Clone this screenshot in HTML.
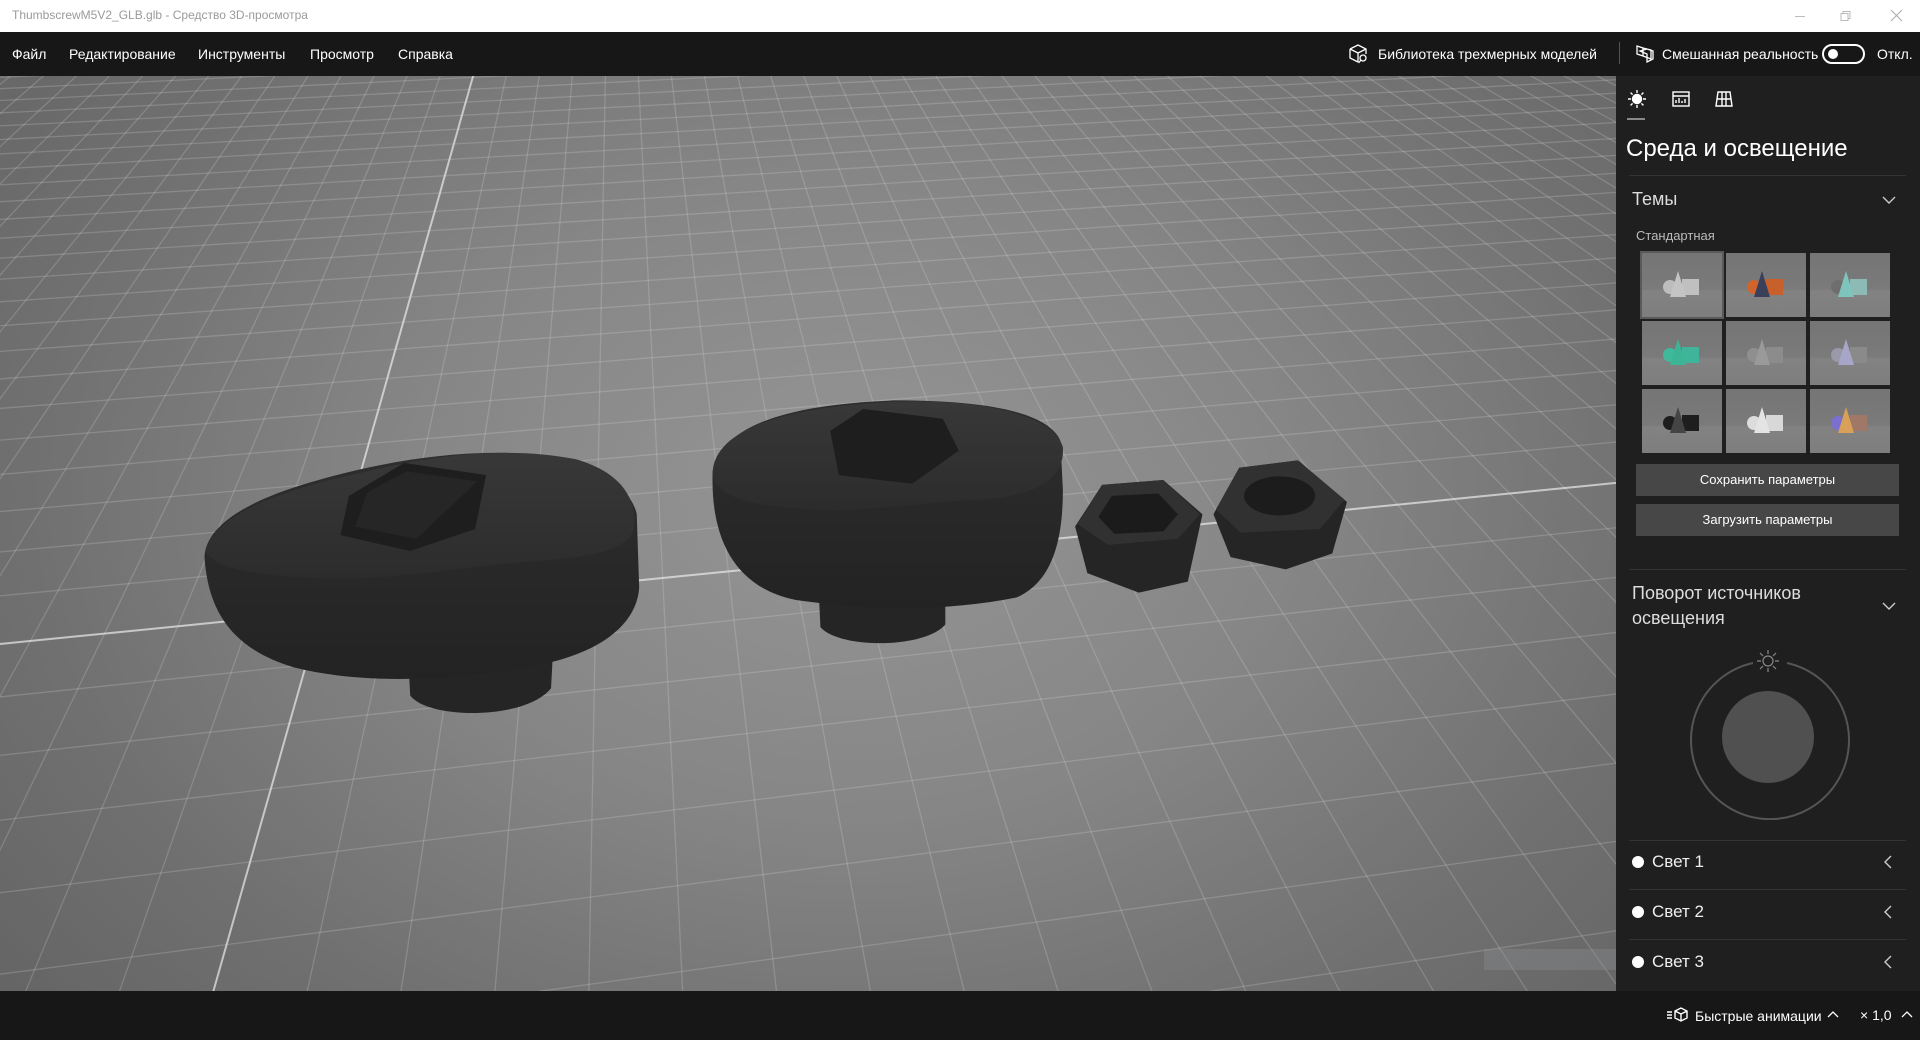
<!DOCTYPE html>
<html><head><meta charset="utf-8">
<style>
*{margin:0;padding:0;box-sizing:border-box}
html,body{width:1920px;height:1040px;overflow:hidden}
body{background:#1f1f1f;font-family:"Liberation Sans","Noto Sans CJK SC",sans-serif;color:#fff;position:relative}
.title{position:absolute;left:0;top:0;width:1920px;height:32px;background:#fff}
.title span{position:absolute;left:12px;top:8px;font-size:12px;color:#9a9a9a}
.menu{position:absolute;left:0;top:32px;width:1920px;height:44px;background:#171717}
.menu .it{position:absolute;top:14px;font-size:14px;color:#fff}
.vp{position:absolute;left:0;top:76px;width:1616px;height:915px;overflow:hidden;background:radial-gradient(ellipse 1100px 800px at 850px 420px,#959595 0%,#868686 40%,#707070 75%,#646464 100%)}
.panel{position:absolute;left:1616px;top:76px;width:304px;height:915px;background:#1f1f1f}
.bottom{position:absolute;left:0;top:991px;width:1920px;height:49px;background:#171717}
.abs{position:absolute}
.hl{position:absolute;left:1629px;width:277px;height:1px;background:#333}
.btn{position:absolute;left:1636px;width:263px;height:32px;background:#474747;font-size:13px;text-align:center;line-height:32px;color:#fff}
.thumb{position:absolute;width:80px;height:64px;background:linear-gradient(#757575 0%,#7a7a7a 55%,#828282 60%,#7e7e7e 100%);overflow:hidden}
.light{position:absolute;left:1632px;font-size:17px;color:#eee}
.light i{position:absolute;left:0;top:4px;width:12px;height:12px;border-radius:50%;background:#fff}
.light span{position:absolute;left:20px;top:0;white-space:nowrap}
</style></head><body>
<div class="title"><span>ThumbscrewM5V2_GLB.glb - Средство 3D-просмотра</span>
<svg class="abs" style="left:1795px;top:8px" width="120" height="16" viewBox="0 0 120 16"><path d="M0 8.5h10" stroke="#bbb"/><path d="M46 5.5h7v7h-7zM48 5.5v-2h7v7h-2" stroke="#bbb" fill="none"/><path d="M96 2l11 11M107 2l-11 11" stroke="#aaa"/></svg>
</div>
<div class="menu">
<span class="it" style="left:12px">Файл</span>
<span class="it" style="left:69px">Редактирование</span>
<span class="it" style="left:198px">Инструменты</span>
<span class="it" style="left:310px">Просмотр</span>
<span class="it" style="left:398px">Справка</span>
<svg class="abs" style="left:1348px;top:11px" width="22" height="22" viewBox="0 0 22 22" fill="none" stroke="#fff" stroke-width="1.3"><path d="M2 6l8-4 8 4v5M2 6v9l8 4M2 6l8 4 8-4M10 10v9"/><circle cx="15" cy="15" r="3"/><path d="M13 17l-2.5 3"/></svg>
<span class="it" style="left:1378px">Библиотека трехмерных моделей</span>
<div class="abs" style="left:1619px;top:10px;width:1px;height:22px;background:#555"></div>
<svg class="abs" style="left:1634px;top:11px" width="22" height="22" viewBox="0 0 22 22" fill="none" stroke="#fff" stroke-width="1.3"><path d="M3 3l6 2v8l-6-2zM9 5l8 2v9l-8-3M6 8l7 3v8l6-3v-8l-6-2-7 2z"/></svg>
<span class="it" style="left:1662px">Смешанная реальность</span>
<div class="abs" style="left:1822px;top:12px;width:43px;height:20px;border:2px solid #fff;border-radius:10px"><div style="position:absolute;left:4px;top:3px;width:10px;height:10px;border-radius:50%;background:#fff"></div></div>
<span class="it" style="left:1877px">Откл.</span>
</div>

<div class="vp"><svg id="g" width="1616" height="915" style="position:absolute;left:0;top:0"></svg>
<svg width="1616" height="915" style="position:absolute;left:0;top:0" viewBox="0 76 1616 915">
<defs><linearGradient id="bd" x1="0" y1="0" x2="0" y2="1"><stop offset="0" stop-color="#2e2e2e"/><stop offset="1" stop-color="#232323"/></linearGradient>
<linearGradient id="tp" x1="0" y1="0" x2="0" y2="1"><stop offset="0" stop-color="#383838"/><stop offset="1" stop-color="#2c2c2c"/></linearGradient></defs>
<g transform="scale(1.2245)">
<path d="M333,530 L452,525 L450,562 C430,588 350,588 335,568 Z" fill="#252525"/>
<path d="M167,455 C170,500 190,530 240,545 C300,560 370,555 430,545 C490,535 520,510 522,480 L520,420 C515,395 480,375 420,370 C360,368 300,380 250,395 C200,410 168,430 167,455 Z" fill="url(#bd)"/>
<path d="M168,450 C175,420 230,400 300,385 C360,370 420,365 470,375 C505,385 520,405 518,430 C515,450 480,455 440,458 C380,462 320,475 260,472 C210,470 175,465 168,450 Z" fill="url(#tp)"/>
<polygon points="285,405 330,378 397,388 388,432 335,450 278,437" fill="#1e1e1e"/>
<polygon points="300,402 332,385 390,393 340,440 290,430" fill="#262626"/>
<path d="M668,470 L772,470 L772,510 C755,530 685,530 670,512 Z" fill="#252525"/>
<path d="M582,385 C580,440 600,480 650,490 C720,500 780,498 830,488 C860,475 868,440 868,400 L866,360 C855,335 800,327 730,327 C650,330 590,345 582,385 Z" fill="url(#bd)"/>
<path d="M582,385 C585,350 640,333 730,328 C800,326 860,338 868,365 C870,395 840,405 800,408 C750,410 700,420 650,415 C600,412 582,400 582,385 Z" fill="url(#tp)"/>
<polygon points="678,352 705,334 770,342 783,368 745,395 685,388" fill="#1e1e1e"/>
<polygon points="878,430 900,396 950,392 982,420 970,475 930,484 888,468" fill="#252525"/>
<polygon points="880,428 900,396 950,392 980,420 962,440 905,445" fill="#313131"/>
<polygon points="897,422 908,405 946,403 962,420 950,434 910,436" fill="#1b1b1b"/>
<polygon points="991,420 1012,382 1060,376 1100,410 1088,452 1050,465 1005,455" fill="#252525"/>
<polygon points="993,416 1012,382 1060,376 1098,408 1078,432 1013,435" fill="#313131"/>
<ellipse cx="1045" cy="405" rx="29" ry="16" fill="#1c1c1c"/>
</g>
<rect x="1484" y="949" width="170" height="21" fill="#8a9096" opacity="0.35"/>
</svg>
</div>

<div class="panel"></div>
<svg class="abs" style="left:1626px;top:88px" width="110" height="24" viewBox="0 0 110 24" fill="none" stroke="#fff" stroke-width="1.4">
<circle cx="11" cy="11" r="4.5" fill="#fff"/><path d="M11 2v3M11 17v3M2 11h3M17 11h3M4.6 4.6l2 2M15.4 15.4l2 2M4.6 17.4l2-2M15.4 6.6l2-2"/>
<rect x="47" y="4" width="16" height="14"/><path d="M47 8h16M50 15v-3M53 15v-5M56 15v-2M59 15v-4"/>
<path d="M92 4h12l2 14h-16zM91 11h14M96 4v14M100 4v14"/>
</svg>
<div class="abs" style="left:1627px;top:118px;width:18px;height:2px;background:#888"></div>
<div class="abs" style="left:1626px;top:135px;font-size:24px;color:#fff">Среда и освещение</div>
<div class="hl" style="top:175px"></div>
<div class="abs" style="left:1632px;top:189px;font-size:18px;color:#ddd">Темы</div>
<svg class="abs" style="left:1881px;top:194px" width="16" height="12"><path d="M2 3l6 6 6-6" stroke="#ccc" fill="none" stroke-width="1.4"/></svg>
<div class="abs" style="left:1636px;top:228px;font-size:13px;color:#bbb">Стандартная</div>
<div id="thumbs"></div>
<div class="btn" style="top:464px">Сохранить параметры</div>
<div class="btn" style="top:504px">Загрузить параметры</div>
<div class="hl" style="top:569px"></div>
<div class="abs" style="left:1632px;top:581px;font-size:18px;line-height:25px;color:#ddd">Поворот источников<br>освещения</div>
<svg class="abs" style="left:1881px;top:600px" width="16" height="12"><path d="M2 3l6 6 6-6" stroke="#ccc" fill="none" stroke-width="1.4"/></svg>
<svg class="abs" style="left:1680px;top:640px" width="180" height="180" viewBox="0 0 180 180">
<path d="M73 23 A79 79 0 1 0 107 23" fill="none" stroke="#555" stroke-width="2"/>
<circle cx="88" cy="97" r="46" fill="#505050"/>
<circle cx="88" cy="21" r="5" fill="none" stroke="#888" stroke-width="1.2"/>
<path d="M88 10v4M88 28v4M77 21h4M95 21h4M80 13l3 3M93 26l3 3M80 29l3-3M93 16l3-3" stroke="#888" stroke-width="1.2"/>
</svg>
<div class="hl" style="top:840px"></div>
<div class="light" style="top:852px"><i></i><span>Свет 1</span></div>
<div class="hl" style="top:889px"></div>
<div class="light" style="top:902px"><i></i><span>Свет 2</span></div>
<div class="hl" style="top:939px"></div>
<div class="light" style="top:952px"><i></i><span>Свет 3</span></div>
<svg class="abs" style="left:1882px;top:853px" width="14" height="120" fill="none" stroke="#ccc" stroke-width="1.4"><path d="M9 3l-6 6 6 6M9 53l-6 6 6 6M9 103l-6 6 6 6"/></svg>
<div class="bottom">
<svg class="abs" style="left:1666px;top:15px" width="24" height="18" viewBox="0 0 24 18" fill="none" stroke="#fff" stroke-width="1.4"><path d="M1 6h5M1 9h5M1 12h5M9 5l6-3 6 3v7l-6 3-6-3zM9 5l6 3 6-3M15 8v7"/></svg>
<span class="abs" style="left:1695px;top:17px;font-size:14px">Быстрые анимации</span>
<svg class="abs" style="left:1826px;top:18px" width="14" height="10"><path d="M2 8l5-5 5 5" stroke="#fff" fill="none" stroke-width="1.3"/></svg>
<span class="abs" style="left:1860px;top:16px;font-size:14px">× 1,0</span>
<svg class="abs" style="left:1900px;top:18px" width="14" height="10"><path d="M2 8l5-5 5 5" stroke="#fff" fill="none" stroke-width="1.3"/></svg>
</div>
<script>
(function(){
var svg=document.getElementById('g'),NS='http://www.w3.org/2000/svg';
var f=1000,cx=808,cy=458,th=43.7*Math.PI/180,h=10,ps=Math.atan(0.14);
var ct=Math.cos(th),st=Math.sin(th),cp=Math.cos(ps),sp=Math.sin(ps);
function proj(X,Z){var x=X*cp-Z*sp,z=X*sp+Z*cp;var yc=h*ct-z*st,zc=h*st+z*ct;return [cx+f*x/zc,cy+f*yc/zc,zc];}
function unp(sx,sy){var a=(sx-cx)/f,b=(sy-cy)/f;var t=h/(b*ct+st);var x=t*a,z=t*(ct-b*st);return [x*cp+z*sp,-x*sp+z*cp];}
var O=unp(321,536),s=0.91;
var pts=[unp(0,0),unp(1616,0),unp(0,915),unp(1616,915)];
var minX=1e9,maxX=-1e9,minZ=1e9,maxZ=-1e9;pts.forEach(function(p){minX=Math.min(minX,p[0]);maxX=Math.max(maxX,p[0]);minZ=Math.min(minZ,p[1]);maxZ=Math.max(maxZ,p[1]);});
minX-=3;maxX+=3;minZ-=3;maxZ+=3;
function seg(x1,z1,x2,z2,main){var N=60,d='';var started=false;
for(var i=0;i<=N;i++){var X=x1+(x2-x1)*i/N,Z=z1+(z2-z1)*i/N;var p=proj(X,Z);if(p[2]<0.5){started=false;continue;}d+=(started?'L':'M')+p[0].toFixed(1)+','+p[1].toFixed(1);started=true;}
var e=document.createElementNS(NS,'path');e.setAttribute('d',d);e.setAttribute('fill','none');
e.setAttribute('stroke',main?'rgba(235,235,235,0.7)':'rgba(225,225,225,0.22)');e.setAttribute('stroke-width',main?2:1.3);svg.appendChild(e);}
var k0=Math.floor((minX-O[0])/s),k1=Math.ceil((maxX-O[0])/s);
for(var k=k0;k<=k1;k++){var X=O[0]+k*s;seg(X,minZ,X,maxZ,k===0);}
k0=Math.floor((minZ-O[1])/s);k1=Math.ceil((maxZ-O[1])/s);
for(var k=k0;k<=k1;k++){var Z=O[1]+k*s;seg(minX,Z,maxX,Z,k===0);}
var th2=document.getElementById('thumbs');
var cols=[['#bdbdbd','#c4c4c4','#c0c0c0'],['#d0642c','#3a3f5a','#c8602c'],['#6e6e6e','#7ec4bc','#8cbab4'],['#3fb89c','#3cb496','#40b49a'],['#8f8f8f','#9a9a9a','#8c8c8c'],['#9999aa','#a7a5c8','#8a8a8a'],['#1d1d1d','#444','#1e1e1e'],['#dcdcdc','#e4e4e4','#d8d8d8'],['#7b6fd0','#d8a058','#a07868']];
var xs=[1642,1726,1810],ys=[253,321,389];
for(var i=0;i<9;i++){var c=cols[i];var d=document.createElement('div');d.className='thumb';d.style.left=xs[i%3]+'px';d.style.top=ys[Math.floor(i/3)]+'px';
if(i===0)d.style.outline='2px solid #5a5a5a';
d.innerHTML='<svg width="80" height="64"><rect x="40" y="26" width="17" height="16" fill="'+c[2]+'"/><circle cx="28" cy="34" r="7" fill="'+c[0]+'"/><polygon points="36,18 28,44 44,44" fill="'+c[1]+'"/></svg>';
th2.appendChild(d);}
})();
</script>
</body></html>
